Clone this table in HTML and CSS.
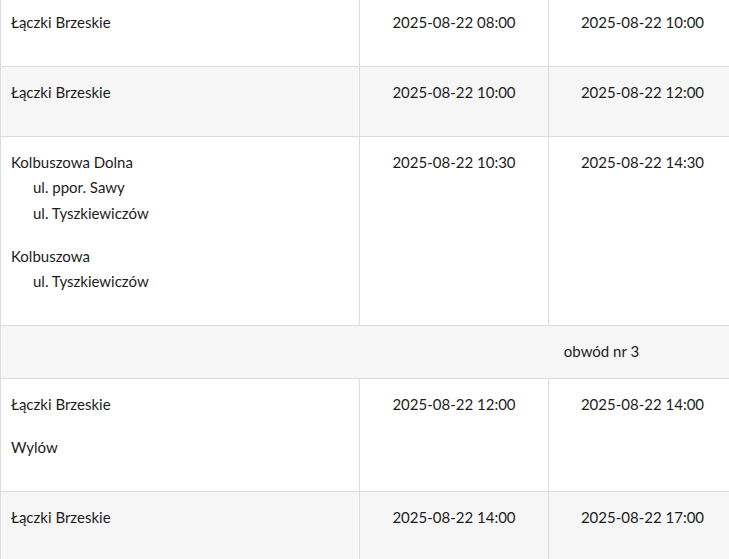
FILE: index.html
```html
<!DOCTYPE html>
<html lang="pl">
<head>
<meta charset="utf-8">
<title>Harmonogram</title>
<link rel="stylesheet" href="styles.css">
</head>
<body>
<table class="schedule">
  <colgroup>
    <col class="c-place">
    <col class="c-time">
    <col class="c-time2">
    <col class="c-rest">
  </colgroup>
  <tbody>
    <tr>
      <td><p>Łączki Brzeskie</p></td>
      <td class="t">2025-08-22 08:00</td>
      <td class="t">2025-08-22 10:00</td>
      <td></td>
    </tr>
    <tr class="alt">
      <td><p>Łączki Brzeskie</p></td>
      <td class="t">2025-08-22 10:00</td>
      <td class="t">2025-08-22 12:00</td>
      <td></td>
    </tr>
    <tr>
      <td>
        <p>Kolbuszowa Dolna<br><span class="street">ul. ppor. Sawy</span><br><span class="street">ul. Tyszkiewiczów</span></p>
        <p>Kolbuszowa<br><span class="street">ul. Tyszkiewiczów</span></p>
      </td>
      <td class="t">2025-08-22 10:30</td>
      <td class="t">2025-08-22 14:30</td>
      <td></td>
    </tr>
    <tr class="alt group">
      <td colspan="4">obwód nr 3</td>
    </tr>
    <tr>
      <td><p>Łączki Brzeskie</p><p>Wylów</p></td>
      <td class="t">2025-08-22 12:00</td>
      <td class="t">2025-08-22 14:00</td>
      <td></td>
    </tr>
    <tr class="alt">
      <td><p>Łączki Brzeskie</p></td>
      <td class="t">2025-08-22 14:00</td>
      <td class="t">2025-08-22 17:00</td>
      <td></td>
    </tr>
  </tbody>
</table>
</body>
</html>
```
FILE: styles.css
```css
html, body {
  margin: 0;
  padding: 0;
  overflow: hidden;
  background: #fff;
}
body {
  font-family: Lato, "Open Sans", "Liberation Sans", sans-serif;
  font-size: 15px;
  color: #1c1c1c;
}
.schedule {
  border-collapse: collapse;
  table-layout: fixed;
  width: 1202px;
  margin-top: -4px;
}
.c-place { width: 359px; }
.c-time { width: 189px; }
.c-time2 { width: 188px; }
.c-rest { width: 466px; }
.schedule td {
  border: 1px solid #dcdcdc;
  padding: 13px 10px;
  line-height: 25.4px;
  vertical-align: top;
  text-align: left;
}
.schedule td.t {
  text-align: center;
  padding-bottom: 0;
}
.schedule p {
  margin: 0 0 17.5px;
}
.street {
  padding-left: 22px;
}
.alt td {
  background: #f6f6f6;
}
.group td {
  text-align: center;
  padding: 13px 10px 14px;
}
```
